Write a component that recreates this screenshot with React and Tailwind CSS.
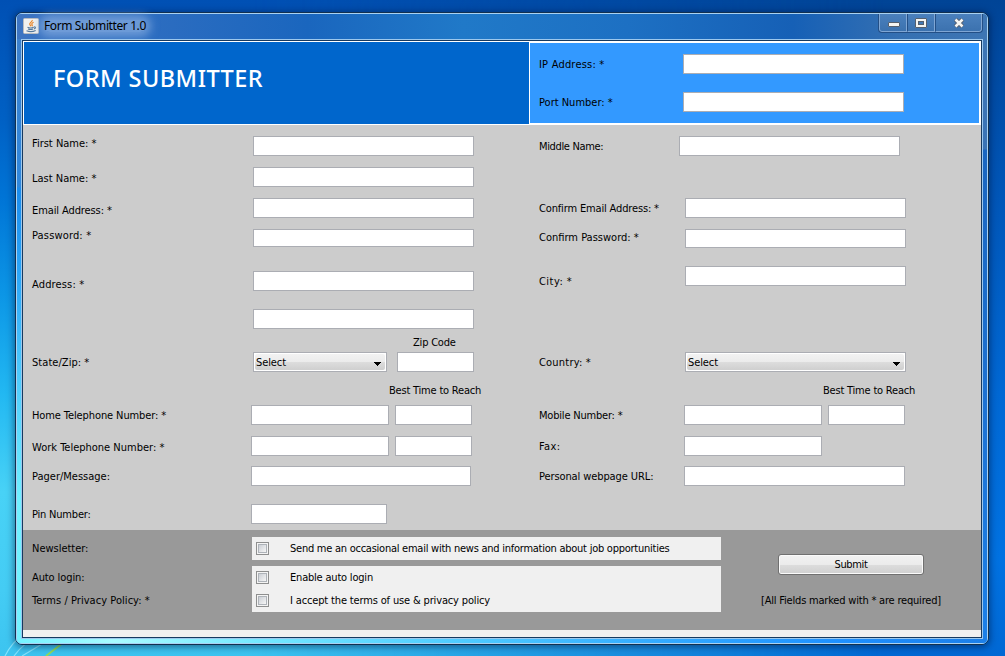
import React from "react";

const T = ({ children, className = "" }) => (
  <span className={"block h-[14px] w-max whitespace-nowrap leading-[16px] " + className}>{children}</span>
);

const Field = ({ className = "" }) => (
  <input type="text" className={"block h-5 border border-[#abadb3] bg-white outline-none " + className} />
);

const Row = ({ h, children }) => (
  <div className={"grid grid-cols-[228px_288px_145px_1fr] items-start " + h}>{children}</div>
);

const Combo = ({ className = "" }) => (
  <button type="button" className={"block h-5 border border-[#abadb3] bg-white p-px text-left " + className}>
    <span className="flex h-4 items-center justify-between rounded-[2px] bg-[linear-gradient(#f2f2f2_0,#ebebeb_50%,#dddddd_50%,#cfcfcf_100%)] pl-px pr-[4px]">
      <T className="tracking-[-0.1px]">Select</T>
      <svg width="7" height="4" viewBox="0 0 7 4" className="mt-[3px]" shapeRendering="crispEdges">
        <path d="M0 0h7v1h-1v1h-1v1h-1v1h-1v-1h-1v-1h-1v-1h-1z" fill="#000" />
      </svg>
    </span>
  </button>
);

const Check = () => (
  <span className="mt-px block h-[13px] w-[13px] shrink-0 border border-[#8e8f8f] bg-[#f4f4f4] p-px">
    <span className="block h-[9px] w-[9px] border border-[#aeb3b9] bg-[linear-gradient(135deg,#cbcfd5,#f6f6f6)]" />
  </span>
);

const JavaIcon = () => (
  <svg width="16" height="16" viewBox="0 0 16 16" className="block">
    <rect x="0.5" y="0.5" width="15" height="15" rx="1" fill="#f1f1ef" stroke="#b9bcc0" />
    <path d="M9.200 2c.8 1.600-3 2.500-2.500 4.200.2.800.9 1.200 1.200 2M10.600 4.300c-1.700.8-2.300 1.600-1.500 2.500.4.500.2 1-.3 1.400" fill="none" stroke="#ea8424" strokeWidth="1.200" />
    <path d="M4.500 9.200c1.500.8 4.500.8 6.300 0M5 11c1.600.6 3.600.6 5.200 0M11 9c1.900-.5 2 1.300 0 1.900M3.500 12.800c2.500 1 6.500 1 9.200-.3" fill="none" stroke="#54789b" strokeWidth="1.100" />
  </svg>
);

const Control = ({ className, children }) => (
  <div className={"flex h-[18px] items-center justify-center border border-t-0 border-[#7fa6d4] " + className}>{children}</div>
);

const TitleBar = () => (
  <div className="flex h-[25px] items-start justify-between rounded-t-[4px] bg-[linear-gradient(to_right,#3c74c2_0%,#2a6cc0_16%,#1a66be_30%,#2079c8_46%,#1d70c3_63%,#1660b6_80%,#3570b2_91%,#3e76b4_100%)]">
    <div className="mt-1 flex items-center pl-[6px]">
      <JavaIcon />
      <div className="-my-1 flex h-6 items-center pl-[5px]">
        <span className="block whitespace-nowrap rounded-full bg-[#86ade0]/70 font-['Noto_Sans',sans-serif] text-[12px] leading-3 tracking-[-0.39px] shadow-[0_0_8px_5px_rgba(134,173,224,0.7)]">Form Submitter 1.0</span>
      </div>
    </div>
    <div className="mr-1 flex h-[19px] overflow-hidden rounded-b-[4px] border border-t-0 border-[#234f86] bg-[linear-gradient(#4a80bd,#3b71ae)]">
      <Control className="w-[28px] rounded-bl-[3px]">
        <svg width="12" height="6" viewBox="0 0 12 6" className="ml-px mt-[5px]"><rect x="0.500" y="0.500" width="11" height="4" rx="0.500" fill="#f5f5f3" stroke="#56606e" /></svg>
      </Control>
      <Control className="w-[28px] border-l-[#234f86]">
        <svg width="12" height="10" viewBox="0 0 12 10"><rect x="0.500" y="0.500" width="11" height="9" rx="0.500" fill="#f5f5f3" stroke="#56606e" /><rect x="3.500" y="3.500" width="5" height="3" fill="#4278b4" stroke="#56606e" /></svg>
      </Control>
      <Control className="w-[47px] rounded-br-[3px] border-l-[#234f86]">
        <svg width="12" height="10" viewBox="0 0 12 10">
          <path d="M2.500 1.500L9.500 8.500M9.500 1.500L2.500 8.500" stroke="#56606e" strokeWidth="4.400" />
          <path d="M2.500 1.500L9.500 8.500M9.500 1.500L2.500 8.500" stroke="#f5f5f3" strokeWidth="2.500" />
        </svg>
      </Control>
    </div>
  </div>
);

const Header = () => (
  <div className="flex h-[84px]">
    <div className="w-[506px] border-y border-l border-white bg-[#0066cc] pl-[29px] pt-[19px]">
      <h1 className="w-max whitespace-nowrap font-['Noto_Sans',sans-serif] text-[23.5px] font-medium leading-[34px] tracking-[0.45px] text-white">FORM SUBMITTER</h1>
    </div>
    <div className="w-[452px] border-2 border-l border-white bg-[#3399ff] pl-[9px] pt-[11px]">
      <div className="flex h-[38px]">
        <T className="mr-auto mt-[3px] tracking-[0.2px]">IP Address: *</T>
        <Field className="mr-[75px] w-[221px]" />
      </div>
      <div className="flex">
        <T className="mr-auto mt-[3px] tracking-[0px]">Port Number: *</T>
        <Field className="mr-[75px] w-[221px]" />
      </div>
    </div>
  </div>
);

const FormBody = () => (
  <div className="h-[405px] bg-[#cccccc] pt-[11px]">
    <Row h="h-[31px]">
      <T className="ml-[9px] tracking-[0px]">First Name: *</T>
      <Field className="ml-[2px] w-[221px]" />
      <T className="mt-[3px] tracking-[-0.35px]">Middle Name:</T>
      <Field className="-ml-[5px] w-[221px]" />
    </Row>
    <Row h="h-[31px]">
      <T className="ml-[9px] mt-[4px] tracking-[0px]">Last Name: *</T>
      <Field className="ml-[2px] w-[221px]" />
    </Row>
    <Row h="h-[31px]">
      <T className="ml-[9px] mt-[5px] tracking-[-0.1px]">Email Address: *</T>
      <Field className="ml-[2px] w-[221px]" />
      <T className="mt-[3px] tracking-[-0.15px]">Confirm Email Address: *</T>
      <Field className="ml-px w-[221px]" />
    </Row>
    <Row h="h-[37px]">
      <T className="-mt-px ml-[9px] tracking-[0.15px]">Password: *</T>
      <Field className="ml-[2px] h-[18px]! w-[221px]" />
      <T className="mt-px tracking-[0px]">Confirm Password: *</T>
      <Field className="ml-px h-[19px]! w-[221px]" />
    </Row>
    <Row h="h-[43px]">
      <T className="ml-[9px] mt-[11px] tracking-[0.15px]">Address: *</T>
      <Field className="ml-[2px] mt-[5px] w-[221px]" />
      <T className="mt-[8px] tracking-[0.45px]">City: *</T>
      <Field className="ml-px w-[221px]" />
    </Row>
    <Row h="h-[26px]">
      <span />
      <Field className="ml-[2px] w-[221px]" />
    </Row>
    <Row h="h-[17px]">
      <span />
      <T className="ml-[162px]">Zip Code</T>
    </Row>
    <Row h="h-[31px]">
      <T className="ml-[9px] mt-[3px] tracking-[0.05px]">State/Zip: *</T>
      <div className="ml-[2px] flex gap-[10px]">
        <Combo className="w-[134px]" />
        <Field className="w-[77px]" />
      </div>
      <T className="mt-[3px] tracking-[0.2px]">Country: *</T>
      <Combo className="ml-px w-[221px]" />
    </Row>
    <Row h="h-[22px]">
      <span />
      <T className="ml-[138px]">Best Time to Reach</T>
      <span />
      <T className="ml-[139px]">Best Time to Reach</T>
    </Row>
    <Row h="h-[31px]">
      <T className="ml-[9px] mt-[3px] tracking-[-0.1px]">Home Telephone Number: *</T>
      <div className="flex gap-[6px]">
        <Field className="w-[138px]" />
        <Field className="w-[77px]" />
      </div>
      <T className="mt-[3px]">Mobile Number: *</T>
      <div className="flex gap-[6px]">
        <Field className="w-[138px]" />
        <Field className="w-[77px]" />
      </div>
    </Row>
    <Row h="h-[30px]">
      <T className="ml-[9px] mt-[4px] tracking-[0px]">Work Telephone Number: *</T>
      <div className="flex gap-[6px]">
        <Field className="w-[138px]" />
        <Field className="w-[77px]" />
      </div>
      <T className="mt-[3px] tracking-[0.4px]">Fax:</T>
      <Field className="w-[138px]" />
    </Row>
    <Row h="h-[38px]">
      <T className="ml-[9px] mt-[3px] tracking-[0px]">Pager/Message:</T>
      <Field className="w-[220px]" />
      <T className="mt-[3px] tracking-[-0.1px]">Personal webpage URL:</T>
      <Field className="w-[221px]" />
    </Row>
    <Row h="h-[20px]">
      <T className="ml-[9px] mt-[3px]">Pin Number:</T>
      <Field className="w-[136px]" />
    </Row>
  </div>
);

const Footer = () => (
  <div className="flex h-[100px] bg-[#999999]">
    <div className="w-[229px] pl-[9px] pt-[11px]">
      <T className="tracking-[-0.02px]">Newsletter:</T>
      <T className="mt-[15px] tracking-[-0.1px]">Auto login:</T>
      <T className="mt-[9px] tracking-[0.05px]">Terms / Privacy Policy: *</T>
    </div>
    <div className="w-[469px] pt-[7px]">
      <label className="flex h-[23px] items-start gap-[21px] bg-[#f0f0f0] pl-1 pt-[4px]">
        <Check />
        <T className="tracking-[-0.25px]">Send me an occasional email with news and information about job opportunities</T>
      </label>
      <div className="mt-[6px] h-[46px] bg-[#f0f0f0] pl-1">
        <label className="flex h-[23px] items-start gap-[21px] pt-[4px]">
          <Check />
          <T>Enable auto login</T>
        </label>
        <label className="flex h-[23px] items-start gap-[21px] pt-[4px]">
          <Check />
          <T className="tracking-[-0.15px]">I accept the terms of use &amp; privacy policy</T>
        </label>
      </div>
    </div>
    <div className="flex w-[260px] flex-col items-center pt-6">
      <button type="button" className="flex h-[21px] w-[146px] items-start justify-center rounded-[3px] border border-[#707070] bg-[linear-gradient(#f2f2f2_0,#ebebeb_50%,#dddddd_50%,#cfcfcf_100%)] pt-[2px] shadow-[inset_0_0_0_1px_#fafafa]">
        <T className="tracking-[-0.35px]">Submit</T>
      </button>
      <T className="mt-[18px]">[All Fields marked with * are required]</T>
    </div>
  </div>
);

export default function App() {
  return (
    <div className="relative h-[656px] w-[1005px] overflow-hidden font-['DejaVu_Sans_Condensed','DejaVu_Sans',sans-serif] text-[11px] tracking-[-0.2px] text-black">
      <div className="h-full w-full bg-[linear-gradient(#004496_0%,#0056b8_30%,#0068d4_60%,#0072e2_85%,#0068d4_100%)] pl-[15px] pt-[12px]">
        <div className="absolute inset-0 bg-[linear-gradient(#0050b4_0%,#0060c4_18%,#0074d6_30%,#0c96e6_45%,#22b8f2_60%,#48d2f6_75%,#44ccf4_90%,#3cc4f0_100%)] [mask-image:linear-gradient(to_right,black_0%,black_25%,transparent_88%)]" />
        <svg className="absolute bottom-0 left-0" width="120" height="40" viewBox="0 0 120 40">
          <path d="M5 40Q12 26 24 18M14 40Q24 26 38 22M22 40L42 28" stroke="#a5efff" strokeWidth="1.200" fill="none" opacity="0.7" />
          <path d="M46 40L64 26" stroke="#8edc5a" strokeWidth="2" fill="none" />
        </svg>
        <div className="relative h-[633px] w-[974px] rounded-[7px] border border-[#12304f] shadow-[0_1px_7px_1px_rgba(0,15,50,0.5)]">
          <div className="flex h-full flex-col rounded-[6px] border border-[#a9d2f2] bg-[#3aa8f4]">
            <TitleBar />
            <div className="flex h-[600px]">
              <div className="w-1 bg-[linear-gradient(#3c80cc_0,#2f87dd_148px,#1a8bec_149px,#29a4f8_230px,#4cc8fc_330px,#70f0ff_460px,#74f2ff_100%)]" />
              <div className="w-[962px] border border-[#9cc8ee]">
                <div className="border border-[#173a60]">
                  <Header />
                  <FormBody />
                  <Footer />
                  <div className="h-[7px] bg-[#f0f0f0]" />
                </div>
              </div>
              <div className="w-1 bg-[linear-gradient(#3e76b4_0,#3a74b6_110px,#1a66c0_111px,#1c70d0_330px,#1c80e8_100%)]" />
            </div>
            <div className="flex-1 rounded-b-[4px] bg-[linear-gradient(to_right,#74f2ff_0%,#a8fbff_10%,#74e8ff_25%,#50ccff_45%,#34acff_65%,#1e90ff_85%,#1c7fe8_100%)]" />
          </div>
        </div>
      </div>
    </div>
  );
}
